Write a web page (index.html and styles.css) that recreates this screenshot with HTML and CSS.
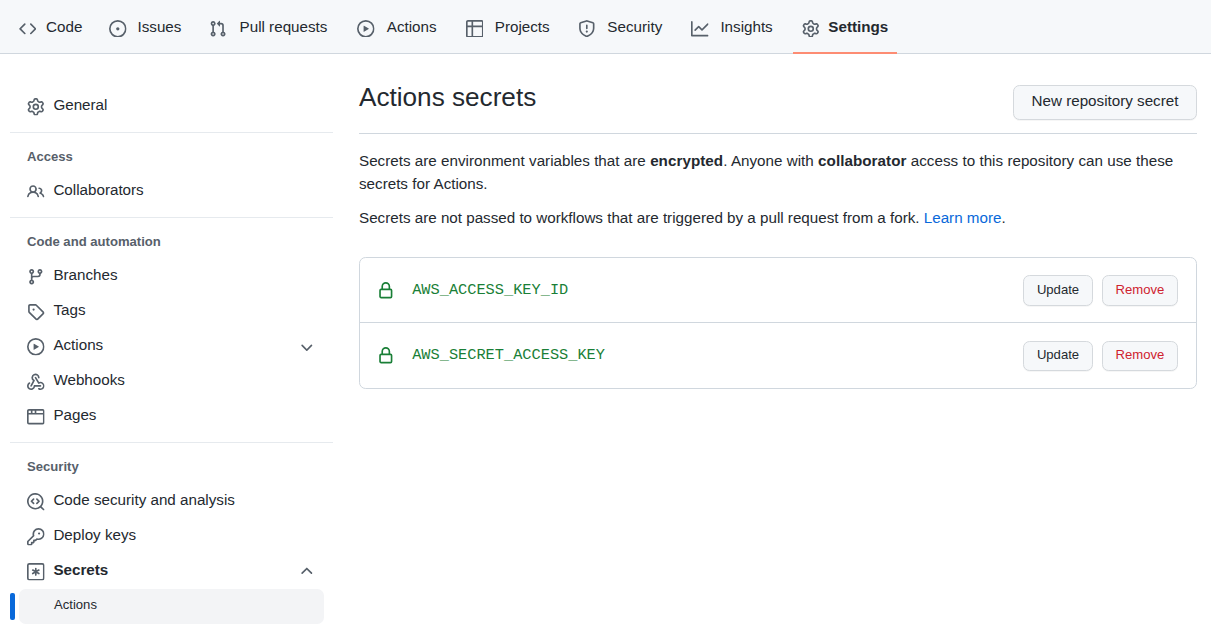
FILE: index.html
```html
<!DOCTYPE html>
<html lang="en">
<head>
<meta charset="utf-8">
<title>Actions secrets</title>
<link rel="stylesheet" href="styles.css">
</head>
<body>
<svg class="sprite" aria-hidden="true">
<symbol id="code" viewBox="0 0 16 16"><path d="M4.72 3.22a.75.75 0 011.06 1.06L2.06 8l3.72 3.72a.75.75 0 11-1.06 1.06L.47 8.53a.75.75 0 010-1.06l4.25-4.25zm6.56 0a.75.75 0 10-1.06 1.06L13.94 8l-3.72 3.72a.75.75 0 101.06 1.06l4.25-4.25a.75.75 0 000-1.06l-4.25-4.25z"/></symbol>
<symbol id="issue" viewBox="0 0 16 16"><path d="M8 9.5a1.5 1.5 0 100-3 1.5 1.5 0 000 3z"/><path fill-rule="evenodd" d="M8 0a8 8 0 100 16A8 8 0 008 0zM1.5 8a6.5 6.5 0 1113 0 6.5 6.5 0 01-13 0z"/></symbol>
<symbol id="pull" viewBox="0 0 16 16"><path fill-rule="evenodd" d="M7.177 3.073L9.573.677A.25.25 0 0110 .854v4.792a.25.25 0 01-.427.177L7.177 3.427a.25.25 0 010-.354zM3.75 2.5a.75.75 0 100 1.5.75.75 0 000-1.5zm-2.25.75a2.25 2.25 0 113 2.122v5.256a2.251 2.251 0 11-1.5 0V5.372A2.25 2.25 0 011.5 3.25zM11 2.5h-1V4h1a1 1 0 011 1v5.628a2.251 2.251 0 101.5 0V5A2.5 2.5 0 0011 2.5zm1 10.25a.75.75 0 111.5 0 .75.75 0 01-1.5 0zM3.75 12a.75.75 0 100 1.5.75.75 0 000-1.5z"/></symbol>
<symbol id="play" viewBox="0 0 16 16"><path fill-rule="evenodd" d="M1.5 8a6.5 6.5 0 1113 0 6.5 6.5 0 01-13 0zM8 0a8 8 0 100 16A8 8 0 008 0zM6.379 5.227A.25.25 0 006 5.442v5.117a.25.25 0 00.379.214l4.264-2.559a.25.25 0 000-.428L6.379 5.227z"/></symbol>
<symbol id="table" viewBox="0 0 16 16"><path fill-rule="evenodd" d="M0 1.75C0 .784.784 0 1.75 0h12.5C15.216 0 16 .784 16 1.75v12.5A1.75 1.75 0 0114.25 16H1.75A1.75 1.75 0 010 14.25V1.75zM1.5 6.5v7.75c0 .138.112.25.25.25H5v-8H1.5zM6.5 6.5v8h7.75a.25.25 0 00.25-.25V6.5h-8zM14.5 5V1.75a.25.25 0 00-.25-.25H6.5V5h8zM5 5V1.5H1.75a.25.25 0 00-.25.25V5H5z"/></symbol>
<symbol id="shield" viewBox="0 0 16 16"><path fill-rule="evenodd" d="M7.467.133a1.75 1.75 0 011.066 0l5.25 1.68A1.75 1.75 0 0115 3.48V7c0 1.566-.32 3.182-1.303 4.682-.983 1.498-2.585 2.813-5.032 3.855a1.7 1.7 0 01-1.33 0c-2.447-1.042-4.049-2.357-5.032-3.855C1.32 10.182 1 8.566 1 7V3.48a1.75 1.75 0 011.217-1.667l5.25-1.68zm.61 1.429a.25.25 0 00-.153 0l-5.25 1.68a.25.25 0 00-.174.238V7c0 1.358.275 2.666 1.057 3.86.784 1.194 2.121 2.34 4.366 3.297a.2.2 0 00.154 0c2.245-.956 3.582-2.104 4.366-3.298C13.225 9.666 13.5 8.36 13.5 7V3.48a.25.25 0 00-.174-.237l-5.25-1.68zM9 10.5a1 1 0 11-2 0 1 1 0 012 0zm-.25-5.75a.75.75 0 10-1.5 0v3a.75.75 0 001.5 0v-3z"/></symbol>
<symbol id="graph" viewBox="0 0 16 16"><path d="M1.5 1.75a.75.75 0 00-1.5 0v12.5c0 .414.336.75.75.75h14.5a.75.75 0 000-1.5H1.5V1.75zm14.28 2.53a.75.75 0 00-1.06-1.06L10 7.94 7.53 5.47a.75.75 0 00-1.06 0L3.22 8.72a.75.75 0 001.06 1.06L7 7.06l2.47 2.47a.75.75 0 001.06 0l5.25-5.25z"/></symbol>
<symbol id="gear" viewBox="0 0 16 16"><path fill-rule="evenodd" d="M7.429 1.525a6.593 6.593 0 011.142 0c.036.003.108.036.137.146l.289 1.105c.147.56.55.967.997 1.189.174.086.341.183.501.29.417.278.97.423 1.53.27l1.102-.303c.11-.03.175.016.195.046.219.31.41.641.573.989.014.031.022.11-.059.19l-.815.806c-.411.406-.562.957-.53 1.456a4.588 4.588 0 010 .582c-.032.499.119 1.05.53 1.456l.815.806c.08.08.073.159.059.19a6.494 6.494 0 01-.573.99c-.02.029-.086.074-.195.045l-1.103-.303c-.559-.153-1.112-.008-1.529.27-.16.107-.327.204-.5.29-.449.222-.851.628-.998 1.189l-.289 1.105c-.029.11-.101.143-.137.146a6.613 6.613 0 01-1.142 0c-.036-.003-.108-.037-.137-.146l-.289-1.105c-.147-.56-.55-.967-.997-1.189a4.502 4.502 0 01-.501-.29c-.417-.278-.97-.423-1.53-.27l-1.102.303c-.11.03-.175-.016-.195-.046a6.492 6.492 0 01-.573-.989c-.014-.031-.022-.11.059-.19l.815-.806c.411-.406.562-.957.53-1.456a4.587 4.587 0 010-.582c.032-.499-.119-1.05-.53-1.456l-.815-.806c-.08-.08-.073-.159-.059-.19a6.44 6.44 0 01.573-.99c.02-.029.086-.075.195-.045l1.103.303c.559.153 1.112.008 1.529-.27.16-.107.327-.204.5-.29.449-.222.851-.628.998-1.189l.289-1.105c.029-.11.101-.143.137-.146zM8 0c-.236 0-.47.01-.701.03-.743.065-1.29.615-1.458 1.261l-.29 1.106c-.017.066-.078.158-.211.224a5.994 5.994 0 00-.668.386c-.123.082-.233.09-.3.071L3.27 2.776c-.644-.177-1.392.02-1.82.63a7.977 7.977 0 00-.704 1.217c-.315.675-.111 1.422.363 1.891l.815.806c.05.048.098.147.088.294a6.084 6.084 0 000 .772c.01.147-.038.246-.088.294l-.815.806c-.474.469-.678 1.216-.363 1.891.2.428.436.835.704 1.218.428.609 1.176.806 1.82.63l1.103-.303c.066-.019.176-.011.299.071.213.143.436.272.668.386.133.066.194.158.212.224l.289 1.106c.169.646.715 1.196 1.458 1.26a8.094 8.094 0 001.402 0c.743-.064 1.29-.614 1.458-1.26l.29-1.106c.017-.066.078-.158.211-.224a5.98 5.98 0 00.668-.386c.123-.082.233-.09.3-.071l1.102.302c.644.177 1.392-.02 1.82-.63.268-.382.505-.789.704-1.217.315-.675.111-1.422-.364-1.891l-.814-.806c-.05-.048-.098-.147-.088-.294a6.1 6.1 0 000-.772c-.01-.147.039-.246.088-.294l.814-.806c.475-.469.679-1.216.364-1.891a7.992 7.992 0 00-.704-1.218c-.428-.609-1.176-.806-1.82-.63l-1.103.303c-.066.019-.176.011-.299-.071a5.991 5.991 0 00-.668-.386c-.133-.066-.194-.158-.212-.224L10.16 1.29C9.99.645 9.444.095 8.701.031A8.094 8.094 0 008 0zm1.5 8a1.5 1.5 0 11-3 0 1.5 1.5 0 013 0zM11 8a3 3 0 11-6 0 3 3 0 016 0z"/></symbol>
<symbol id="people" viewBox="0 0 16 16"><path fill-rule="evenodd" d="M5.5 3.5a2 2 0 100 4 2 2 0 000-4zM2 5.5a3.5 3.5 0 115.898 2.549 5.507 5.507 0 013.034 4.084.75.75 0 11-1.482.235 4.001 4.001 0 00-7.9 0 .75.75 0 01-1.482-.236A5.507 5.507 0 013.102 8.05 3.49 3.49 0 012 5.5zM11 4a.75.75 0 100 1.5 1.5 1.5 0 01.666 2.844.75.75 0 00-.416.672v.352a.75.75 0 00.574.73c1.2.289 2.162 1.2 2.522 2.372a.75.75 0 101.434-.44 5.01 5.01 0 00-2.56-3.012A3 3 0 0011 4z"/></symbol>
<symbol id="branch" viewBox="0 0 16 16"><path fill-rule="evenodd" d="M11.75 2.5a.75.75 0 100 1.5.75.75 0 000-1.5zm-2.25.75a2.25 2.25 0 113 2.122V6A2.5 2.5 0 0110 8.5H6a1 1 0 00-1 1v1.128a2.251 2.251 0 11-1.5 0V5.372a2.25 2.25 0 111.5 0v1.836A2.492 2.492 0 016 7h4a1 1 0 001-1v-.628A2.25 2.25 0 019.5 3.25zM4.25 12a.75.75 0 100 1.5.75.75 0 000-1.5zM3.5 3.25a.75.75 0 111.5 0 .75.75 0 01-1.5 0z"/></symbol>
<symbol id="tag" viewBox="0 0 16 16"><path fill-rule="evenodd" d="M2.5 7.775V2.75a.25.25 0 01.25-.25h5.025a.25.25 0 01.177.073l6.25 6.25a.25.25 0 010 .354l-5.025 5.025a.25.25 0 01-.354 0l-6.25-6.25a.25.25 0 01-.073-.177zm-1.5 0V2.75C1 1.784 1.784 1 2.75 1h5.025c.464 0 .91.184 1.238.513l6.25 6.25a1.75 1.75 0 010 2.474l-5.026 5.026a1.75 1.75 0 01-2.474 0l-6.25-6.25A1.75 1.75 0 011 7.775zM6 5a1 1 0 100 2 1 1 0 000-2z"/></symbol>
<symbol id="webhook" viewBox="0 0 16 16"><path d="M5.5 4.25a2.25 2.25 0 014.5 0 .75.75 0 001.5 0 3.75 3.75 0 10-6.14 2.889l-2.272 4.258a.75.75 0 001.324.706L7 7.25a.75.75 0 00-.309-1.015A2.25 2.25 0 015.5 4.25z"/><path d="M7.364 3.607a.75.75 0 011.03.257l2.608 4.349a3.75 3.75 0 11-.628 6.785.75.75 0 01.752-1.299 2.25 2.25 0 10-.033-3.88.75.75 0 01-1.03-.256L7.107 4.636a.75.75 0 01.257-1.03z"/><path d="M2.9 8.776A.75.75 0 012.625 9.8 2.25 2.25 0 106 11.75a.75.75 0 01.75-.751h5.5a.75.75 0 010 1.5H7.425a3.751 3.751 0 11-5.55-3.998.75.75 0 011.024.274z"/></symbol>
<symbol id="browser" viewBox="0 0 16 16"><path fill-rule="evenodd" d="M0 2.75C0 1.784.784 1 1.75 1h12.5c.966 0 1.75.784 1.75 1.75v10.5A1.75 1.75 0 0114.25 15H1.75A1.75 1.75 0 010 13.25V2.75zm1.75-.25a.25.25 0 00-.25.25V4.5h2v-2H1.75zM5 2.5v2h2v-2H5zm3.5 0v2h6V2.75a.25.25 0 00-.25-.25H8.5zm6 3.5h-13v7.25c0 .138.112.25.25.25h12.5a.25.25 0 00.25-.25V6z"/></symbol>
<symbol id="codescan" viewBox="0 0 16 16"><path d="M8.47 4.97a.75.75 0 000 1.06L9.94 7.5 8.47 8.97a.75.75 0 101.06 1.06l2-2a.75.75 0 000-1.06l-2-2a.75.75 0 00-1.06 0zM6.53 6.03a.75.75 0 00-1.06-1.06l-2 2a.75.75 0 000 1.06l2 2a.75.75 0 101.06-1.06L5.06 7.5l1.47-1.47z"/><path fill-rule="evenodd" d="M12.246 13.307a7.5 7.5 0 111.06-1.06l2.474 2.473a.75.75 0 11-1.06 1.06l-2.474-2.473zM1.5 7.5a6 6 0 1110.386 4.094.75.75 0 00-.292.293A6 6 0 011.5 7.5z"/></symbol>
<symbol id="key" viewBox="0 0 16 16"><path fill-rule="evenodd" d="M6.5 5.5a4 4 0 112.731 3.795.75.75 0 00-.768.18L7.44 10.5H6.25a.75.75 0 00-.75.75v1.19l-.06.06H4.25a.75.75 0 00-.75.75v1.19l-.06.06H1.75a.25.25 0 01-.25-.25v-1.69l5.024-5.023a.75.75 0 00.181-.768A3.995 3.995 0 016.5 5.5zm4-5.5a5.5 5.5 0 00-5.348 6.788L.22 11.72a.75.75 0 00-.22.53v2C0 15.216.784 16 1.75 16h2a.75.75 0 00.53-.22l.5-.5a.75.75 0 00.22-.53V14h.75a.75.75 0 00.53-.22l.5-.5a.75.75 0 00.22-.53V12h.75a.75.75 0 00.53-.22l.932-.932A5.5 5.5 0 1010.5 0zm.5 6a1 1 0 100-2 1 1 0 000 2z"/></symbol>
<symbol id="asterisk" viewBox="0 0 16 16"><g fill="none" stroke="currentColor" stroke-width="1.5" stroke-linecap="round"><rect x=".75" y=".75" width="14.5" height="14.5" rx="1.4"/><path d="M8 5v6M5.2 6.4l5.6 3.2M10.8 6.4l-5.6 3.2"/></g></symbol>
<symbol id="lock" viewBox="0 0 16 16"><path fill-rule="evenodd" d="M4 4v2h-.25A1.75 1.75 0 002 7.75v5.5c0 .966.784 1.75 1.75 1.75h8.5A1.75 1.75 0 0014 13.25v-5.5A1.75 1.75 0 0012.25 6H12V4a4 4 0 10-8 0zm6.5 2V4a2.5 2.5 0 10-5 0v2h5zM12 7.5h.25a.25.25 0 01.25.25v5.5a.25.25 0 01-.25.25h-8.5a.25.25 0 01-.25-.25v-5.5a.25.25 0 01.25-.25H12z"/></symbol>
<symbol id="down" viewBox="0 0 16 16"><path d="M12.78 6.22a.75.75 0 010 1.06l-4.25 4.25a.75.75 0 01-1.06 0L3.22 7.28a.75.75 0 011.06-1.06L8 9.94l3.72-3.72a.75.75 0 011.06 0z"/></symbol>
<symbol id="up" viewBox="0 0 16 16"><path d="M3.22 9.78a.75.75 0 010-1.06l4.25-4.25a.75.75 0 011.06 0l4.25 4.25a.75.75 0 01-1.06 1.06L8 6.06 4.28 9.78a.75.75 0 01-1.06 0z"/></symbol>
</svg>

<nav class="tabs">
  <a class="tab"><svg class="icon"><use href="#code"/></svg><span class="tab-label" data-content="Code">Code</span></a>
  <a class="tab"><svg class="icon"><use href="#issue"/></svg><span class="tab-label" data-content="Issues">Issues</span></a>
  <a class="tab"><svg class="icon"><use href="#pull"/></svg><span class="tab-label" data-content="Pull requests">Pull requests</span></a>
  <a class="tab"><svg class="icon"><use href="#play"/></svg><span class="tab-label" data-content="Actions">Actions</span></a>
  <a class="tab"><svg class="icon"><use href="#table"/></svg><span class="tab-label" data-content="Projects">Projects</span></a>
  <a class="tab"><svg class="icon"><use href="#shield"/></svg><span class="tab-label" data-content="Security">Security</span></a>
  <a class="tab"><svg class="icon"><use href="#graph"/></svg><span class="tab-label" data-content="Insights">Insights</span></a>
  <a class="tab tab-selected"><svg class="icon"><use href="#gear"/></svg><span class="tab-label" data-content="Settings">Settings</span></a>
</nav>

<div class="layout">
  <aside class="sidebar">
    <div class="group">
      <a class="item"><svg class="icon"><use href="#gear"/></svg><span class="label">General</span></a>
    </div>
    <div class="group">
      <h3 class="group-title">Access</h3>
      <a class="item"><svg class="icon"><use href="#people"/></svg><span class="label">Collaborators</span></a>
    </div>
    <div class="group">
      <h3 class="group-title">Code and automation</h3>
      <a class="item"><svg class="icon"><use href="#branch"/></svg><span class="label">Branches</span></a>
      <a class="item"><svg class="icon"><use href="#tag"/></svg><span class="label">Tags</span></a>
      <a class="item"><svg class="icon"><use href="#play"/></svg><span class="label">Actions</span><svg class="icon"><use href="#down"/></svg></a>
      <a class="item"><svg class="icon"><use href="#webhook"/></svg><span class="label">Webhooks</span></a>
      <a class="item"><svg class="icon"><use href="#browser"/></svg><span class="label">Pages</span></a>
    </div>
    <div class="group">
      <h3 class="group-title">Security</h3>
      <a class="item"><svg class="icon"><use href="#codescan"/></svg><span class="label">Code security and analysis</span></a>
      <a class="item"><svg class="icon"><use href="#key"/></svg><span class="label">Deploy keys</span></a>
      <a class="item item-open"><svg class="icon"><use href="#asterisk"/></svg><span class="label">Secrets</span><svg class="icon"><use href="#up"/></svg></a>
      <a class="item item-current"><span class="label">Actions</span></a>
    </div>
  </aside>

  <main class="content">
    <header class="subhead">
      <h2 class="title">Actions secrets</h2>
      <button class="btn">New repository secret</button>
    </header>
    <p class="note note-lead">Secrets are environment variables that are <strong>encrypted</strong>. Anyone with <strong>collaborator</strong> access to this repository can use these secrets for Actions.</p>
    <p class="note">Secrets are not passed to workflows that are triggered by a pull request from a fork. <a class="link">Learn more</a>.</p>
    <div class="box">
      <div class="row">
        <svg class="icon lock"><use href="#lock"/></svg>
        <code class="name">AWS_ACCESS_KEY_ID</code>
        <button class="btn btn-sm btn-update">Update</button>
        <button class="btn btn-sm btn-danger">Remove</button>
      </div>
      <div class="row">
        <svg class="icon lock"><use href="#lock"/></svg>
        <code class="name">AWS_SECRET_ACCESS_KEY</code>
        <button class="btn btn-sm btn-update">Update</button>
        <button class="btn btn-sm btn-danger">Remove</button>
      </div>
    </div>
  </main>
</div>
</body>
</html>
```

FILE: styles.css
```css
* { box-sizing: border-box; }

body {
  margin: 0;
  height: 634px;
  overflow: hidden;
  background: #fff;
  color: #24292f;
  font-family: "Liberation Sans", Arial, sans-serif;
  font-size: 15.2px;
  line-height: 23px;
}

.sprite { display: none; }

.icon {
  flex: none;
  width: 17.6px;
  height: 17.6px;
  fill: currentColor;
  color: #57606a;
}

/* Top tabs */
.tabs {
  display: flex;
  gap: 8.7px;
  height: 54px;
  padding-left: 10px;
  background: #f6f8fa;
  border-bottom: 1px solid #d0d7de;
}

.tab {
  display: flex;
  align-items: center;
  gap: 8.8px;
  height: 54px;
  padding: 4px 8.8px 0;
  border-bottom: 2px solid transparent;
}

.tab .icon { margin-top: 1px; }

.tab-label {
  padding-bottom: 3px;
  text-align: center;
}

/* Reserves the bold width so labels keep their place when selected */
.tab-label::before {
  content: attr(data-content);
  display: block;
  height: 0;
  font-weight: 600;
  visibility: hidden;
}

.tab-selected {
  border-bottom-color: #fd8c73;
  font-weight: 600;
}

/* Page columns */
.layout {
  display: grid;
  grid-template-columns: 323px 838px;
  gap: 26px;
  padding-left: 10px;
}

.sidebar { padding-top: 35px; }

.group {
  padding: 0 9px 8px;
}

.group + .group {
  padding-top: 8px;
  border-top: 1px solid #e6eaee;
}

.group-title {
  margin: 0;
  padding: 5px 8px 5px;
  height: 33px;
  color: #57606a;
  font-size: 13.1px;
  font-weight: 600;
  line-height: 22px;
}

.item {
  display: flex;
  align-items: center;
  gap: 8.8px;
  height: 35px;
  padding: 1px 8px 0;
}

.label {
  flex: 1;
  padding-bottom: 5px;
}

.item-open { font-weight: 600; }

.item-current {
  position: relative;
  padding-left: 35px;
  border-radius: 6.6px;
  background: #f3f4f6;
  font-size: 13.1px;
}

.item-current::before {
  content: "";
  position: absolute;
  left: -9px;
  top: 4px;
  width: 5px;
  height: 27px;
  border-radius: 2px;
  background: #0969da;
}

/* Main column */
.content { padding-top: 31px; }

.subhead {
  display: flex;
  justify-content: space-between;
  height: 49px;
  margin-bottom: 15px;
  border-bottom: 1px solid #d0d7de;
}

.title {
  margin: 0;
  padding-top: 2px;
  font-size: 26.15px;
  font-weight: 400;
  line-height: 20px;
}

.btn {
  width: 184px;
  height: 35px;
  padding: 0 0 4px;
  border: 1px solid #d5d9dd;
  border-radius: 6.6px;
  background: #f6f8fa;
  box-shadow: 0 1px 0 rgba(27, 31, 36, 0.04);
  color: #24292f;
  font: inherit;
}

.note { margin: 0 0 11px; }

.note-lead { word-spacing: 0.12px; }

.note-lead strong { letter-spacing: 0.05px; }

.link { color: #0969da; }

.box {
  margin-top: 28px;
  border: 1px solid #d0d7de;
  border-radius: 6.6px;
}

.row {
  display: flex;
  align-items: center;
  height: 64px;
  padding: 1px 18px 0 17px;
}

.row + .row {
  height: 66px;
  border-top: 1px solid #d0d7de;
}

.lock { color: #1a7f37; }

.name {
  flex: 1;
  padding: 0 0 1px 17.6px;
  color: #1a7f37;
  font-family: "Liberation Mono", monospace;
  font-size: 15.3px;
}

.btn-sm {
  width: 76px;
  height: 31px;
  padding-bottom: 3px;
  font-size: 13.1px;
}

.row + .row .btn-sm { height: 30px; }

.btn-update {
  width: 70px;
  margin-right: 9px;
}

.btn-danger { color: #cf222e; }
```
